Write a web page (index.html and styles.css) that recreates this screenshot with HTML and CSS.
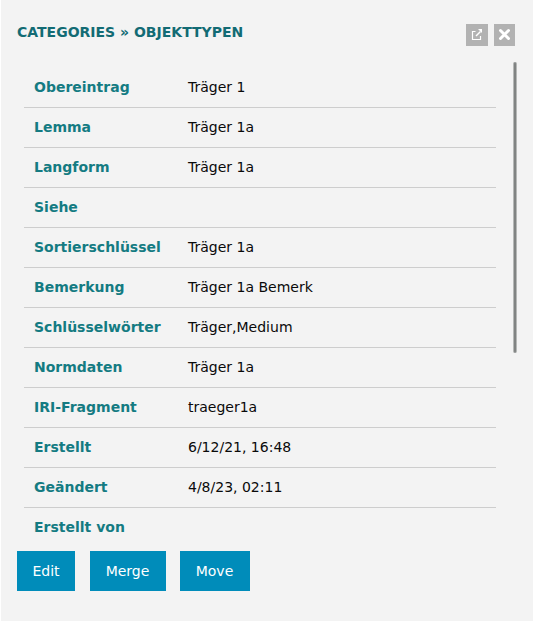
FILE: index.html
```html
<!DOCTYPE html>
<html lang="de">
<head>
<meta charset="utf-8">
<title>Categories</title>
<link rel="stylesheet" href="styles.css">
</head>
<body>
<section class="panel">
  <header class="panel-head">
    <h1 class="title">CATEGORIES » OBJEKTTYPEN</h1>
    <div class="tools">
      <button class="tool open" aria-label="Open"><svg width="22" height="22" viewBox="0 0 22 22" fill="none" stroke="#fff"><path d="M9.5 7.5H6.5V15.5H14.5V12" stroke-width="1.2"/><path d="M10 12L14.5 7.5" stroke-width="1.5"/><path d="M12 5H16V9Z" fill="#fff" stroke="none"/></svg></button>
      <button class="tool close" aria-label="Close"><svg width="21" height="22" viewBox="0 0 21 22" fill="none" stroke="#fff" stroke-width="3" stroke-linecap="round"><path d="M6.5 6.5L14.5 14.5M14.5 6.5L6.5 14.5"/></svg></button>
    </div>
  </header>
  <div class="viewport">
    <dl class="entries">
      <div class="row"><dt>Obereintrag</dt><dd>Träger 1</dd></div>
      <div class="row"><dt>Lemma</dt><dd>Träger 1a</dd></div>
      <div class="row"><dt>Langform</dt><dd>Träger 1a</dd></div>
      <div class="row"><dt>Siehe</dt><dd></dd></div>
      <div class="row"><dt>Sortierschlüssel</dt><dd>Träger 1a</dd></div>
      <div class="row"><dt>Bemerkung</dt><dd>Träger 1a Bemerk</dd></div>
      <div class="row"><dt>Schlüsselwörter</dt><dd>Träger,Medium</dd></div>
      <div class="row"><dt>Normdaten</dt><dd>Träger 1a</dd></div>
      <div class="row"><dt>IRI-Fragment</dt><dd>traeger1a</dd></div>
      <div class="row"><dt>Erstellt</dt><dd>6/12/21, 16:48</dd></div>
      <div class="row"><dt>Geändert</dt><dd>4/8/23, 02:11</dd></div>
      <div class="row"><dt>Erstellt von</dt><dd></dd></div>
    </dl>
    <div class="scrollbar"></div>
  </div>
  <footer class="actions">
    <button class="action edit">Edit</button>
    <button class="action merge">Merge</button>
    <button class="action move">Move</button>
  </footer>
</section>
</body>
</html>
```
FILE: styles.css
```css
* { box-sizing: border-box; }
body { margin: 0; background: #f3f3f3; font: 14px/20px "DejaVu Sans", sans-serif; color: #0a0a0a; }
button { border: 0; padding: 0; font: inherit; }
.panel { height: 621px; padding: 22px 16px 0; border-left: 1px solid #fff; display: flex; flex-direction: column; overflow: hidden; }
.panel-head { height: 40px; display: flex; justify-content: space-between; align-items: flex-start; }
.title { margin: 0; font-size: 14px; line-height: 20px; font-weight: bold; color: #126b74; }
.tools { display: flex; gap: 6px; margin: 2px 2px 0 0; }
.tool { height: 22px; background: #b2b2b2; }
.tool svg { display: block; }
.open { width: 22px; }
.close { width: 21px; }
.viewport { height: 480px; display: flex; justify-content: space-between; overflow: hidden; }
.entries { width: 472px; margin: 5px 0 0 7px; }
.row { height: 40px; padding: 9px 10px 10px; border-bottom: 1px solid #cdcdcd; display: flex; }
.row:first-child { height: 41px; padding-top: 10px; }
.row:last-child { border-bottom: 0; }
dt { width: 154px; flex: none; font-weight: bold; color: #147b82; }
dd { margin: 0; }
.scrollbar { width: 4px; height: 291px; border: solid #b5b7b6; border-width: 0 1px; border-radius: 2px; background: #808382; }
.actions { display: flex; margin-top: 9px; gap: 15px; }
.action { height: 40px; background: #008cba; color: #fff; }
.edit { width: 58px; }
.merge { width: 76px; padding-right: 1px; }
.move { width: 70px; margin-left: -1px; padding-right: 1px; }
```
